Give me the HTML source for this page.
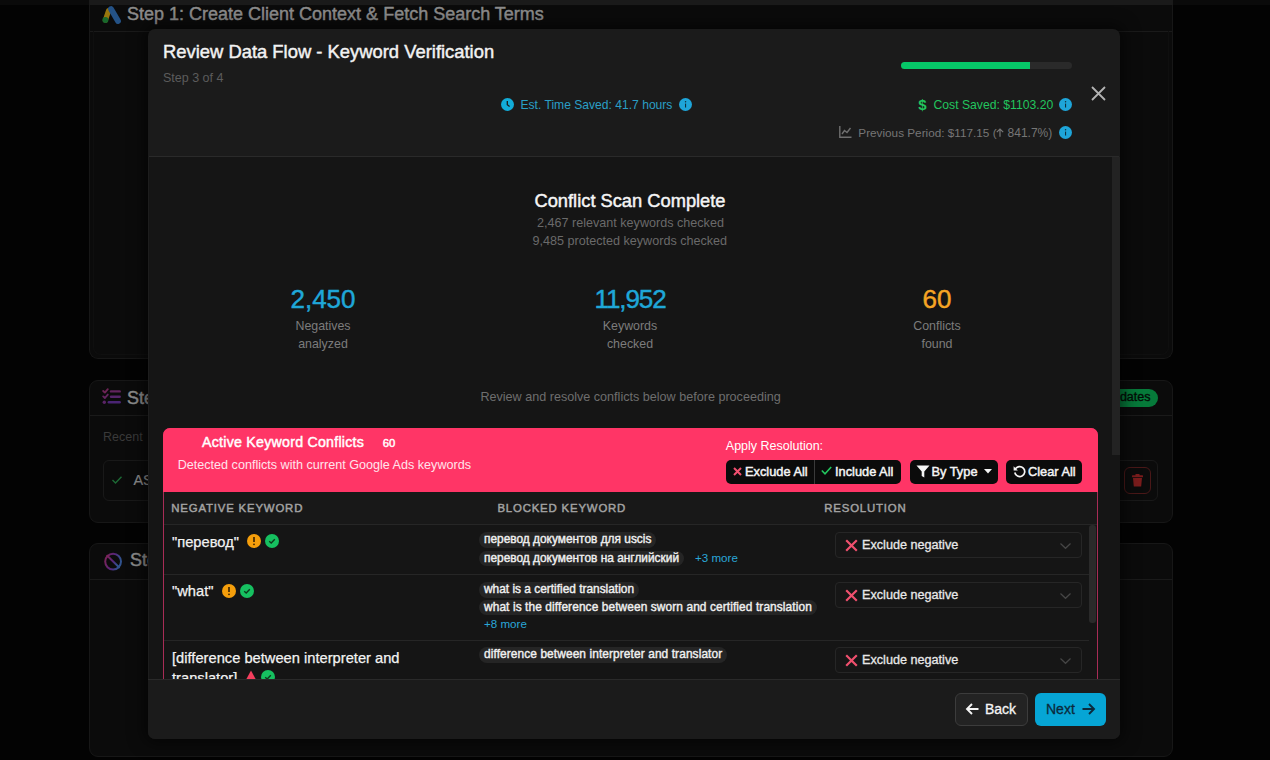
<!DOCTYPE html>
<html><head><meta charset="utf-8">
<style>
*{box-sizing:border-box;margin:0;padding:0}
html,body{width:1270px;height:760px;overflow:hidden;background:#030303;font-family:"Liberation Sans",sans-serif}
.a{position:absolute}
.t{position:absolute;white-space:nowrap;line-height:1}
.card{position:absolute;left:89px;width:1084px;background:#0b0b0b;border:1px solid #171717;border-radius:9px}
.chead{position:absolute;left:0;top:0;right:0;border-bottom:1px solid #1a1a1a}
svg{position:absolute;overflow:visible}
.pill{position:absolute;height:15.5px;border-radius:8px;background:#252525;color:#f0f0f0;font-size:11.9px;font-weight:400;-webkit-text-stroke:.4px #f0f0f0;line-height:15.5px;padding:0 5px;white-space:nowrap}
.sb{-webkit-text-stroke:.45px currentColor;font-weight:400}
.more{position:absolute;font-size:11.6px;color:#2aa6d8;white-space:nowrap;line-height:1}
.sep{position:absolute;left:164px;width:925px;height:1px;background:#262626}
.dd{position:absolute;left:835px;width:247px;height:26px;border:1px solid #262626;border-radius:4px;background:#161616}
.ddt{position:absolute;left:26px;top:6.3px;font-size:12.65px;color:#e8e8e8;-webkit-text-stroke:.3px #e8e8e8;line-height:1;white-space:nowrap}
.kw{position:absolute;left:172px;font-size:14.7px;font-weight:400;-webkit-text-stroke:.25px #f2f2f2;color:#f2f2f2;line-height:1;white-space:nowrap}
.th{position:absolute;top:502.8px;font-size:11.4px;font-weight:400;-webkit-text-stroke:.45px #a3a3a3;color:#a3a3a3;letter-spacing:.82px;line-height:1;white-space:nowrap}
.btn{position:absolute;top:460px;height:24px;background:#0b0b0b;border-radius:5px;color:#f5f5f5;font-size:12.5px;font-weight:700;line-height:24px;white-space:nowrap}
</style></head><body>
<!-- ===== background page ===== -->
<div class="a" style="left:0;top:0;width:1270px;height:5px;background:#0a0a0a"></div>
<div class="a" style="left:89px;top:0;width:1084px;height:5px;background:#1a1a1a"></div>

<!-- card 1 -->
<div class="card" style="top:5px;height:354px;border-top:none;border-radius:0 0 9px 9px">
  <div class="chead" style="height:27px"></div>
</div>
<svg style="left:98px;top:2px" width="30" height="26" viewBox="0 0 30 26">
  <line x1="10.6" y1="8.6" x2="7.4" y2="18.1" stroke="#98760e" stroke-width="5.2" stroke-linecap="round"/>
  <line x1="13" y1="7" x2="20" y2="19" stroke="#245286" stroke-width="5.8" stroke-linecap="round"/>
  <circle cx="7.4" cy="18.1" r="3" fill="#18682c"/>
</svg>
<div class="t sb" style="left:127px;top:4.8px;font-size:18px;color:#8c8c8c">Step 1: Create Client Context &amp; Fetch Search Terms</div>

<div class="a" style="left:93px;top:31px;width:1076px;height:324px;border:1px solid #0f0f0f;border-top:none;border-radius:0 0 8px 8px"></div>
<!-- card 2 -->
<div class="card" style="top:380px;height:143px">
  <div class="chead" style="height:35px"></div>
</div>
<svg style="left:98px;top:384px" width="30" height="26" viewBox="0 0 30 26">
  <defs><linearGradient id="gl" x1="0" y1="0" x2="1" y2="1"><stop offset="0" stop-color="#8a2a62"/><stop offset="1" stop-color="#4e2a8e"/></linearGradient></defs>
  <path d="M5.2 7 L6.9 8.6 L9.8 5.2" stroke="#6e2456" stroke-width="1.9" fill="none" stroke-linecap="round" stroke-linejoin="round"/>
  <path d="M5.2 12.4 L6.9 14 L9.8 10.6" stroke="#64245e" stroke-width="1.9" fill="none" stroke-linecap="round" stroke-linejoin="round"/>
  <circle cx="6.3" cy="18.3" r="1.7" fill="#5a2466"/>
  <line x1="13" y1="7.4" x2="21.7" y2="7.4" stroke="#62245e" stroke-width="2.4" stroke-linecap="round"/>
  <line x1="13" y1="12.8" x2="21.7" y2="12.8" stroke="#56246a" stroke-width="2.4" stroke-linecap="round"/>
  <line x1="10.8" y1="18.3" x2="21.7" y2="18.3" stroke="#4a2474" stroke-width="2.4" stroke-linecap="round"/>
</svg>
<div class="t sb" style="left:127px;top:388.5px;font-size:18px;color:#8c8c8c">Step</div>
<div class="t" style="left:103px;top:431px;font-size:12.5px;color:#3a3a3a">Recent</div>
<div class="a" style="left:103px;top:460px;width:1055px;height:41px;border:1px solid #191919;border-radius:6px"></div>
<svg style="left:112px;top:476px" width="10" height="8" viewBox="0 0 10 8"><path d="M0.5 4 L3.5 7 L9.5 0.8" stroke="#1d6a35" stroke-width="1.4" fill="none"/></svg>
<div class="t" style="left:133.4px;top:473px;font-size:14.5px;color:#8c8c8c;-webkit-text-stroke:.2px #8c8c8c">AS</div>
<div class="a" style="left:1100px;top:389px;width:58px;height:17.5px;border-radius:9px;background:#067a3a"></div>
<div class="t" style="left:1106px;top:391px;font-size:12.5px;color:#030d06;-webkit-text-stroke:.35px #030d06">updates</div>
<div class="a" style="left:1124px;top:467px;width:27px;height:27px;border:1px solid #4a1818;border-radius:6px"></div>
<svg style="left:1132px;top:474px" width="11" height="13" viewBox="0 0 11 13"><rect x="0" y="1.2" width="11" height="2" rx="0.5" fill="#7a1c1c"/><rect x="3.5" y="0" width="4" height="2" fill="#7a1c1c"/><path d="M1 4 L10 4 L9.2 12.5 L1.8 12.5 Z" fill="#7a1c1c"/></svg>

<!-- card 3 -->
<div class="card" style="top:543px;height:214px">
  <div class="chead" style="height:36px"></div>
</div>
<svg style="left:98px;top:548px" width="30" height="28" viewBox="0 0 30 28">
  <defs><linearGradient id="g3" x1="0" y1="0" x2="1" y2="0.3"><stop offset="0" stop-color="#7e2456"/><stop offset=".55" stop-color="#582478"/><stop offset="1" stop-color="#30528e"/></linearGradient></defs>
  <circle cx="15.1" cy="13.6" r="7.9" stroke="url(#g3)" stroke-width="2" fill="none"/>
  <line x1="9.3" y1="7.7" x2="21" y2="19.3" stroke="url(#g3)" stroke-width="2" stroke-linecap="round"/>
</svg>
<div class="t sb" style="left:130px;top:550.5px;font-size:18px;color:#8c8c8c">Step</div>

<!-- ===== modal ===== -->
<div class="a" style="left:148px;top:29px;width:972px;height:710px;background:#1b1b1b;border-radius:7px;box-shadow:0 0 16px 4px rgba(0,0,0,.55)"></div>
<!-- header -->
<div class="t sb" style="left:163px;top:43.3px;font-size:18.4px;color:#f2f2f2">Review Data Flow - Keyword Verification</div>
<div class="t" style="left:163px;top:71.8px;font-size:12.5px;color:#5c5c5c">Step 3 of 4</div>
<!-- progress -->
<div class="a" style="left:901px;top:62px;width:171px;height:7px;border-radius:4px;background:#2a2a2a"></div>
<div class="a" style="left:901px;top:62px;width:129px;height:7px;border-radius:4px 0 0 4px;background:#06c768"></div>
<!-- close -->
<svg style="left:1091px;top:86px" width="15" height="15" viewBox="0 0 15 15"><path d="M1 1 L14 14 M14 1 L1 14" stroke="#b3b3b3" stroke-width="1.8"/></svg>
<!-- est time -->
<svg style="left:501px;top:98px" width="13" height="13" viewBox="0 0 13 13"><circle cx="6.5" cy="6.5" r="6.5" fill="#12acd8"/><path d="M6.3 3 L6.3 6.8 L8.6 8.6" stroke="#1b1b1b" stroke-width="1.3" fill="none"/></svg>
<div class="t" style="left:520.5px;top:98.9px;font-size:12.1px;color:#2a9fc6">Est. Time Saved: 41.7 hours</div>
<svg style="left:679px;top:98px" width="13" height="13" viewBox="0 0 13 13"><circle cx="6.5" cy="6.5" r="6.5" fill="#1ea5d9"/><rect x="6" y="5.6" width="1.1" height="3.9" fill="#10303e"/><circle cx="6.55" cy="3.8" r="0.75" fill="#10303e"/></svg>
<!-- cost saved -->
<div class="t" style="left:918.3px;top:96.6px;font-size:15px;font-weight:700;color:#22c55e">$</div>
<div class="t" style="left:933.5px;top:99.3px;font-size:12.2px;color:#22c55e">Cost Saved: $1103.20</div>
<svg style="left:1059px;top:98px" width="13" height="13" viewBox="0 0 13 13"><circle cx="6.5" cy="6.5" r="6.5" fill="#1ea5d9"/><rect x="6" y="5.6" width="1.1" height="3.9" fill="#10303e"/><circle cx="6.55" cy="3.8" r="0.75" fill="#10303e"/></svg>
<!-- previous period -->
<svg style="left:839px;top:126px" width="13" height="12" viewBox="0 0 13 12"><path d="M0.8 0 L0.8 11.2 L12.5 11.2" stroke="#6f6f6f" stroke-width="1.4" fill="none"/><path d="M3 8 L5.5 4.5 L8 6.5 L11.5 2" stroke="#6f6f6f" stroke-width="1.4" fill="none"/></svg>
<div class="t" style="left:858.3px;top:126.9px;font-size:11.75px;color:#767676">Previous Period: $117.15 (</div>
<svg style="left:996px;top:128px" width="8" height="9" viewBox="0 0 8 9"><path d="M4 8.8 L4 1 M0.8 4.2 L4 1 L7.2 4.2" stroke="#767676" stroke-width="1.2" fill="none"/></svg>
<div class="t" style="left:1007.6px;top:126.9px;font-size:12px;color:#767676">841.7%)</div>
<svg style="left:1059px;top:126px" width="13" height="13" viewBox="0 0 13 13"><circle cx="6.5" cy="6.5" r="6.5" fill="#1ea5d9"/><rect x="6" y="5.6" width="1.1" height="3.9" fill="#10303e"/><circle cx="6.55" cy="3.8" r="0.75" fill="#10303e"/></svg>
<!-- header border -->
<div class="a" style="left:149px;top:156px;width:970px;height:1px;background:#2a2a2a"></div>
<!-- body -->
<div class="a" style="left:148px;top:157px;width:972px;height:522px;background:#151515;border-left:1px solid #1d1d1d"></div>
<div class="a" style="left:1112px;top:157px;width:8px;height:298px;background:#232323"></div>

<div class="t sb" style="left:534.5px;top:191.5px;font-size:18.3px;color:#f5f5f5">Conflict Scan Complete</div>
<div class="t" style="left:537px;top:216.7px;font-size:12.6px;color:#6a6a6a">2,467 relevant keywords checked</div>
<div class="t" style="left:532.5px;top:235.3px;font-size:12.6px;color:#6a6a6a">9,485 protected keywords checked</div>

<div class="t" style="left:223px;width:200px;text-align:center;top:285.5px;font-size:26px;color:#1fa7d8;-webkit-text-stroke:.45px #1fa7d8">2,450</div>
<div class="t" style="left:223px;width:200px;text-align:center;top:320.1px;font-size:12.4px;color:#7c7c7c">Negatives</div>
<div class="t" style="left:223px;width:200px;text-align:center;top:337.6px;font-size:12.4px;color:#7c7c7c">analyzed</div>
<div class="t" style="left:530px;width:200px;text-align:center;top:285.5px;font-size:26px;letter-spacing:-1.1px;color:#1fa7d8;-webkit-text-stroke:.45px #1fa7d8">11,952</div>
<div class="t" style="left:530px;width:200px;text-align:center;top:320.1px;font-size:12.4px;color:#7c7c7c">Keywords</div>
<div class="t" style="left:530px;width:200px;text-align:center;top:337.6px;font-size:12.4px;color:#7c7c7c">checked</div>
<div class="t" style="left:837px;width:200px;text-align:center;top:285.5px;font-size:26px;color:#f5a524;-webkit-text-stroke:.45px #f5a524">60</div>
<div class="t" style="left:837px;width:200px;text-align:center;top:320.1px;font-size:12.4px;color:#7c7c7c">Conflicts</div>
<div class="t" style="left:837px;width:200px;text-align:center;top:337.6px;font-size:12.4px;color:#7c7c7c">found</div>

<div class="t" style="left:480.4px;top:391.4px;font-size:12.6px;color:#6e6e6e">Review and resolve conflicts below before proceeding</div>

<!-- conflicts section -->
<div class="a" style="left:163px;top:428px;width:935px;height:300px;border:1px solid #a82c56;border-radius:7px 7px 0 0;background:#151515"></div>
<div class="a" style="left:163px;top:428px;width:935px;height:64px;background:#ff3566;border-radius:7px 7px 0 0"></div>
<div class="t sb" style="left:202px;top:435px;font-size:14.2px;letter-spacing:.25px;color:#fff">Active Keyword Conflicts</div>
<div class="t sb" style="left:382.7px;top:437.5px;font-size:11.3px;color:#fff">60</div>
<div class="t" style="left:177.7px;top:458.6px;font-size:12.6px;color:#ffe4ec">Detected conflicts with current Google Ads keywords</div>
<div class="t" style="left:725.8px;top:440px;font-size:12.5px;color:#fff">Apply Resolution:</div>
<div class="btn" style="left:726px;width:175px"></div>
<div class="a" style="left:814px;top:460px;width:1px;height:24px;background:#3a3a3a"></div>
<svg style="left:733px;top:467px" width="9" height="9" viewBox="0 0 9 9"><path d="M1 1 L8 8 M8 1 L1 8" stroke="#f25070" stroke-width="2"/></svg>
<div class="t sb" style="left:745px;top:465.8px;font-size:12.8px;color:#f5f5f5">Exclude All</div>
<svg style="left:821px;top:466px" width="11" height="9" viewBox="0 0 11 9"><path d="M0.8 4.5 L4 7.8 L10.2 1" stroke="#22c55e" stroke-width="1.6" fill="none"/></svg>
<div class="t sb" style="left:835px;top:465.8px;font-size:12.8px;color:#f5f5f5">Include All</div>
<div class="btn" style="left:910px;width:88px"></div>
<svg style="left:916px;top:465px" width="14" height="13" viewBox="0 0 14 13"><path d="M0.5 0.5 L13.5 0.5 L8.3 6.5 L8.3 12.5 L5.7 11 L5.7 6.5 Z" fill="#f5f5f5"/></svg>
<div class="t sb" style="left:931.5px;top:465.8px;font-size:12.8px;color:#f5f5f5">By Type</div>
<svg style="left:984px;top:469px" width="8" height="5" viewBox="0 0 8 5"><path d="M0 0 L8 0 L4 4.5 Z" fill="#f5f5f5"/></svg>
<div class="btn" style="left:1006px;width:76px"></div>
<svg style="left:1013px;top:465px" width="13" height="13" viewBox="0 0 13 13"><path d="M2.3 4.2 A5 5 0 1 1 1.8 7.5" stroke="#f5f5f5" stroke-width="1.7" fill="none"/><path d="M0.6 1.2 L0.6 5.4 L4.8 5.4 Z" fill="#f5f5f5"/></svg>
<div class="t sb" style="left:1028px;top:465.8px;font-size:12.8px;color:#f5f5f5">Clear All</div>

<!-- table header -->
<div class="a" style="left:164px;top:492px;width:933px;height:32px;background:#181818"></div>
<div class="th" style="left:171.3px">NEGATIVE KEYWORD</div>
<div class="th" style="left:497.4px">BLOCKED KEYWORD</div>
<div class="th" style="left:824.3px">RESOLUTION</div>
<div class="a" style="left:164px;top:524px;width:933px;height:1px;background:#262626"></div>
<div class="a" style="left:1089px;top:525px;width:7px;height:98px;border-radius:3px;background:#2a2a2a"></div>

<!-- row 1 -->
<div class="kw" style="top:534.9px">"перевод"</div>
<svg style="left:247px;top:534px" width="14" height="14" viewBox="0 0 14 14"><circle cx="7" cy="7" r="7" fill="#f59e0b"/><rect x="6.2" y="3" width="1.6" height="5" fill="#3a2200"/><circle cx="7" cy="10.3" r="0.9" fill="#3a2200"/></svg>
<svg style="left:265px;top:534px" width="14" height="14" viewBox="0 0 14 14"><circle cx="7" cy="7" r="7" fill="#16c060"/><path d="M4.2 7.2 L6.2 9 L9.8 5.2" stroke="#0c3a1c" stroke-width="1.4" fill="none"/></svg>
<div class="pill" style="left:479px;top:532px">перевод документов для uscis</div>
<div class="pill" style="left:479px;top:550.5px">перевод документов на английский</div>
<div class="more" style="left:695px;top:551.6px">+3 more</div>
<div class="dd" style="top:531.5px">
  <svg style="left:9px;top:6px" width="13" height="13" viewBox="0 0 13 13"><path d="M1.2 1.2 L11.8 11.8 M11.8 1.2 L1.2 11.8" stroke="#f0506e" stroke-width="2.2"/></svg>
  <div class="ddt">Exclude negative</div>
  <svg style="left:224px;top:10px" width="11" height="6" viewBox="0 0 11 6"><path d="M0.5 0.5 L5.5 5.3 L10.5 0.5" stroke="#464646" stroke-width="1.2" fill="none"/></svg>
</div>
<div class="sep" style="top:574px"></div>

<!-- row 2 -->
<div class="kw" style="top:584px">"what"</div>
<svg style="left:222px;top:584px" width="14" height="14" viewBox="0 0 14 14"><circle cx="7" cy="7" r="7" fill="#f59e0b"/><rect x="6.2" y="3" width="1.6" height="5" fill="#3a2200"/><circle cx="7" cy="10.3" r="0.9" fill="#3a2200"/></svg>
<svg style="left:240px;top:584px" width="14" height="14" viewBox="0 0 14 14"><circle cx="7" cy="7" r="7" fill="#16c060"/><path d="M4.2 7.2 L6.2 9 L9.8 5.2" stroke="#0c3a1c" stroke-width="1.4" fill="none"/></svg>
<div class="pill" style="left:479px;top:582px">what is a certified translation</div>
<div class="pill" style="left:479px;top:599.5px;letter-spacing:.1px">what is the difference between sworn and certified translation</div>
<div class="more" style="left:484px;top:618px">+8 more</div>
<div class="dd" style="top:581.5px">
  <svg style="left:9px;top:6px" width="13" height="13" viewBox="0 0 13 13"><path d="M1.2 1.2 L11.8 11.8 M11.8 1.2 L1.2 11.8" stroke="#f0506e" stroke-width="2.2"/></svg>
  <div class="ddt">Exclude negative</div>
  <svg style="left:224px;top:10px" width="11" height="6" viewBox="0 0 11 6"><path d="M0.5 0.5 L5.5 5.3 L10.5 0.5" stroke="#464646" stroke-width="1.2" fill="none"/></svg>
</div>
<div class="sep" style="top:640px"></div>

<!-- row 3 -->
<div class="kw" style="top:650.6px">[difference between interpreter and</div>
<div class="kw" style="top:671.2px">translator]</div>
<svg style="left:244px;top:670px" width="14" height="13" viewBox="0 0 14 13"><path d="M7 0.5 L13.5 12.5 L0.5 12.5 Z" fill="#f43f5e"/></svg>
<svg style="left:261px;top:670px" width="14" height="14" viewBox="0 0 14 14"><circle cx="7" cy="7" r="7" fill="#16c060"/><path d="M4.2 7.2 L6.2 9 L9.8 5.2" stroke="#0c3a1c" stroke-width="1.4" fill="none"/></svg>
<div class="pill" style="left:479px;top:647px;letter-spacing:.1px">difference between interpreter and translator</div>
<div class="dd" style="top:647px">
  <svg style="left:9px;top:6px" width="13" height="13" viewBox="0 0 13 13"><path d="M1.2 1.2 L11.8 11.8 M11.8 1.2 L1.2 11.8" stroke="#f0506e" stroke-width="2.2"/></svg>
  <div class="ddt">Exclude negative</div>
  <svg style="left:224px;top:10px" width="11" height="6" viewBox="0 0 11 6"><path d="M0.5 0.5 L5.5 5.3 L10.5 0.5" stroke="#464646" stroke-width="1.2" fill="none"/></svg>
</div>

<!-- footer -->
<div class="a" style="left:148px;top:679px;width:972px;height:60px;background:#1b1b1b;border-top:1px solid #2a2a2a;border-radius:0 0 7px 7px"></div>
<div class="a" style="left:955px;top:693px;width:73px;height:33px;border:1px solid #3c3c3c;border-radius:6px;background:#232323"></div>
<svg style="left:966px;top:703px" width="13" height="12" viewBox="0 0 13 12"><path d="M12.5 6 L1.5 6 M6 1 L1 6 L6 11" stroke="#f5f5f5" stroke-width="1.9" fill="none"/></svg>
<div class="t" style="left:985px;top:701.5px;font-size:14px;color:#f5f5f5;-webkit-text-stroke:.3px #f5f5f5">Back</div>
<div class="a" style="left:1035px;top:693px;width:71px;height:33px;border-radius:6px;background:#06a5d5"></div>
<div class="t" style="left:1046px;top:701.5px;font-size:14px;color:#0b2a3c;-webkit-text-stroke:.3px #0b2a3c">Next</div>
<svg style="left:1082px;top:703px" width="13" height="12" viewBox="0 0 13 12"><path d="M0.5 6 L11.5 6 M7 1 L12 6 L7 11" stroke="#0b2a3c" stroke-width="1.9" fill="none"/></svg>
</body></html>
